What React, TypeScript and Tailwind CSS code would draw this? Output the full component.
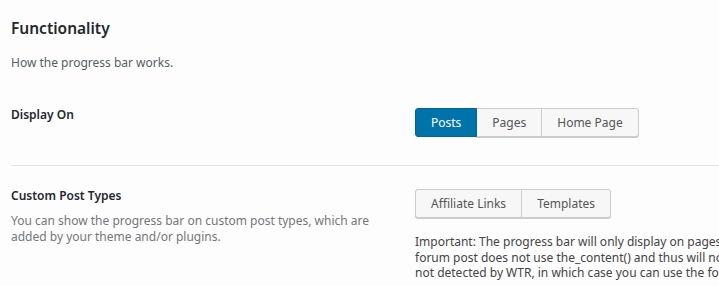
import React from 'react';

const displayOptions = [
  { label: 'Posts', active: true },
  { label: 'Pages', active: false },
  { label: 'Home Page', active: false },
];

const postTypes = ['Affiliate Links', 'Templates'];

const ButtonGroup: React.FC<{ items: { label: string; active: boolean }[] }> = ({ items }) => (
  <div className="flex">
    {items.map((item, i) => (
      <button
        key={item.label}
        className={
          'h-[29px] px-[15px] text-[12px] leading-[27px] border ' +
          (i === 0 ? 'rounded-l-[3px] ' : '-ml-px ') +
          (i === items.length - 1 ? 'rounded-r-[3px] ' : '') +
          (item.active
            ? 'relative z-10 bg-[#0073aa] border-[#006799] text-white'
            : 'bg-[#f7f7f7] border-[#cccccc] text-[#555555] shadow-[0_1px_0_#cccccc]')
        }
      >
        {item.label}
      </button>
    ))}
  </div>
);

export default function App() {
  return (
    <div className="w-[719px] h-[286px] overflow-hidden bg-[#fdfdfd] font-['Segoe_UI','Noto_Sans',sans-serif] text-[12px] text-[#444444]">
      <div className="w-[900px] pl-[11px]">
        {/* Section header */}
        <h2 className="pt-[17px] text-[15.5px] leading-[22px] font-semibold text-[#23282d]">Functionality</h2>
        <p className="mt-[15px] leading-[18px] text-[#555d66]">How the progress bar works.</p>

        {/* Display On */}
        <div className="flex mt-[31px]">
          <div className="w-[404px] pt-[3px] font-semibold text-[#23282d] leading-[18px]">Display On</div>
          <div className="mt-[5px]">
            <ButtonGroup items={displayOptions} />
          </div>
        </div>

        <div className="mt-[28px] border-t border-[#e2e4e7]" />

        {/* Custom Post Types */}
        <div className="flex mt-[19px]">
          <div className="w-[404px] shrink-0">
            <div className="font-semibold text-[#23282d] leading-[18px] pt-[2px]">Custom Post Types</div>
            <p className="mt-[8px] w-[372px] leading-[15.5px] text-[#72777c]">
              You can show the progress bar on custom post types, which are added by your theme and/or plugins.
            </p>
          </div>
          <div className="mt-[4px]">
            <ButtonGroup items={postTypes.map((label) => ({ label, active: false }))} />
            <div className="mt-[16px] leading-[15.5px] text-[#444444] whitespace-nowrap">
              <div>Important: The progress bar will only display on pages and posts that use the_content(). For example, a bbPress</div>
              <div>forum post does not use the_content() and thus will not show the progress bar. Some themes also have content that is</div>
              <div>not detected by WTR, in which case you can use the following shortcode.</div>
            </div>
          </div>
        </div>
      </div>
    </div>
  );
}
